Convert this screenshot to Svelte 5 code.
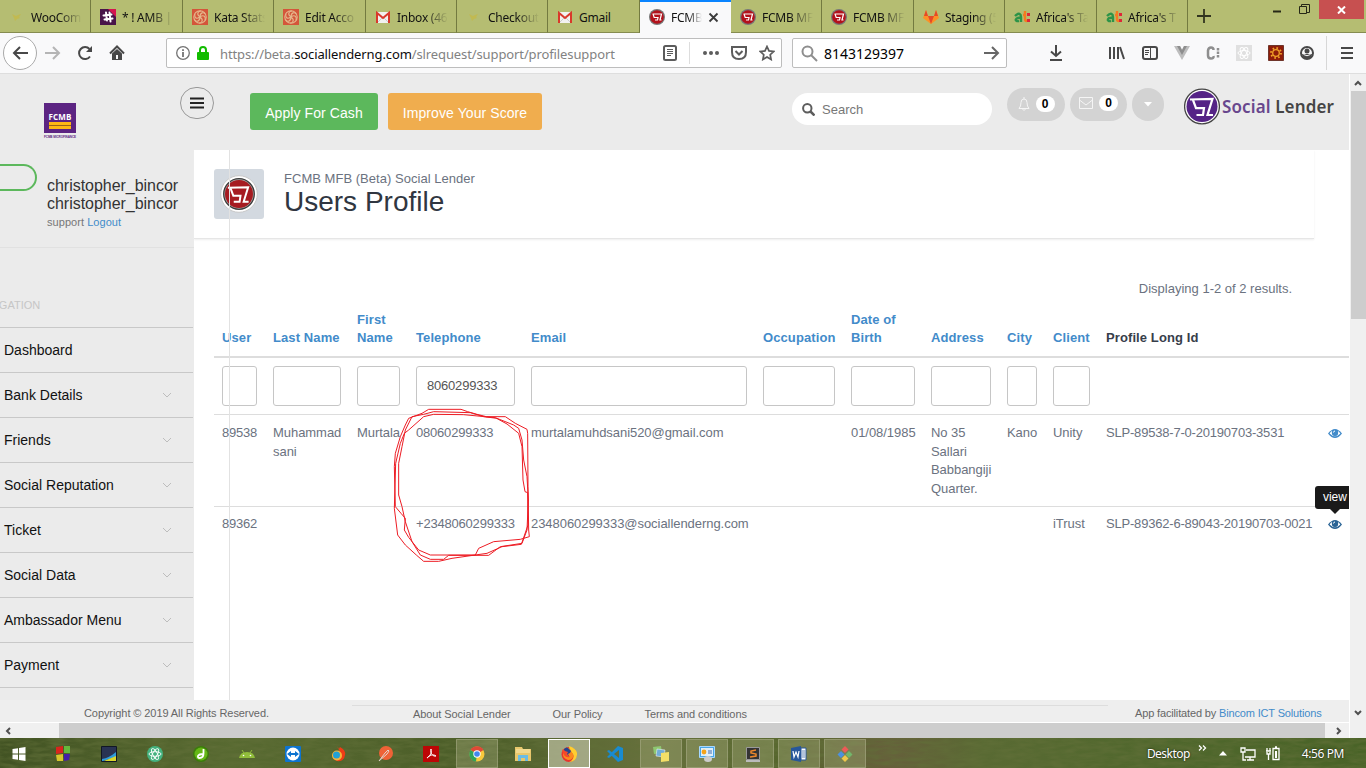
<script>
  const tabs = [
    { t: 'WooCom', i: 'woo', w: 91 }, { t: '* ! AMB | B', i: 'slack', w: 92 }, { t: 'Kata Stats', i: 'kata', w: 91 },
    { t: 'Edit Acco', i: 'kata', w: 92 }, { t: 'Inbox (468', i: 'gmail', w: 91 }, { t: 'Checkout', i: 'woo', w: 91 },
    { t: 'Gmail', i: 'gmail', w: 92 }, { t: 'FCMB', i: 'cart', w: 91, active: true }, { t: 'FCMB MF', i: 'cart', w: 91 },
    { t: 'FCMB MF', i: 'cart', w: 92 }, { t: 'Staging (5', i: 'gitlab', w: 91 }, { t: "Africa's Ta", i: 'at', w: 92 }, { t: "Africa's T", i: 'at', w: 91 }
  ];
  const nav = ['Dashboard', 'Bank Details', 'Friends', 'Social Reputation', 'Ticket', 'Social Data', 'Ambassador Menu', 'Payment'];
  const heads = ['User', 'Last Name', 'First Name', 'Telephone', 'Email', 'Occupation', 'Date of Birth', 'Address', 'City', 'Client', 'Profile Long Id', ''];
  const rows = [
    ['89538', 'Muhammad sani', 'Murtala', '08060299333', 'murtalamuhdsani520@gmail.com', '', '01/08/1985', 'No 35 Sallari Babbangiji Quarter.', 'Kano', 'Unity', 'SLP-89538-7-0-20190703-3531'],
    ['89362', '', '', '+2348060299333', '2348060299333@sociallenderng.com', '', '', '', '', 'iTrust', 'SLP-89362-6-89043-20190703-0021']
  ];
  const apps = [
    ['win', ''], ['blocks', ''], ['photo', ''], ['atom', ''], ['dream', ''], ['android', ''], ['team', ''], ['flame', ''], ['postman', ''], ['pdf', ''],
    ['chrome', 'open'], ['folder', ''], ['firefox', 'front'], ['code', ''], ['notes', 'open'], ['monitor', 'open'], ['sublime', 'open'], ['word', 'open'], ['git', 'open']
  ];
</script>

{#snippet icon(n, s = 16)}
  <svg width={s} height={s} viewBox="0 0 16 16" fill="none">
    {#if n === 'woo'}
      <path d="M3 5l4 2 2-1 3-1-2 3 1 1-3 1-2 2-1-3z" fill="#c9b83c" opacity=".6" />
    {:else if n === 'slack'}
      <path d="M0 0h16v16H0z" fill="#481449" /><path d="M8 0h8v8z" fill="#d5144f" />
      <path d="M3.500 6.500l8-1M4.500 10.500l8-1M6 3.500l1 8M9.500 3.500l1 9" stroke="#fff" stroke-width="2" stroke-linecap="round" />
    {:else if n === 'kata'}
      <path d="M0 0h16v16H0z" fill="#d4563a" />
      <g stroke="#e5b78c" stroke-width="1.100"><circle cx="8" cy="8" r="6.200" /><path d="M8 8c-4-3-2-6 1-6M8 8c0-5 4-5 5-3M8 8c4-3 6 0 5 3M8 8c4 3 2 6-1 6M8 8c0 5-4 5-5 3M8 8c-4 3-6 0-5-3" /></g>
    {:else if n === 'gmail'}
      <path d="M1 3h14v11H1z" fill="#f2f2f0" /><path d="M3 13L8 8l5 5" stroke="#ccc" /><path d="M2 14V4l6 5 6-5v10" stroke="#d9392b" stroke-width="2" />
    {:else if n === 'cart'}
      <circle cx="8" cy="8" r="8" fill="#777" /><circle cx="8" cy="8" r="6.800" fill="#b3111b" /><path d="M3.500 5h9l-1.500 6h1.500M4 5l1.200 3.500H9L8.500 11H6" stroke="#fff" stroke-width="1.200" />
    {:else if n === 'gitlab'}
      <path d="M3 1L0 9l8 6 8-6-3-8-2 6H5z" fill="#fc9126" /><path d="M3 1L1 7h4zM13 1l2 6h-4zM5 7h6l-3 8z" fill="#e34a29" />
    {:else if n === 'at'}
      <path d="M1 7c4-4 6-2 6 1v5M7 9c-6-1-7 4-2 3" stroke="#2d9448" stroke-width="2.400" /><path d="M11 2v8q0 2 2 2M9 6h3" stroke="#f47b20" stroke-width="2.400" /><path d="M13 4h3v3h-3zM13 10h3v3h-3z" fill="#df2638" />
    {:else if n === 'win'}
      <path d="M1.500 3l5.500-.8V7.500H1.500zM8 2l6.500-1v6.500H8zM1.500 8.500H7v5.300L1.500 13zM8 8.500h6.500V15L8 14z" fill="#fff" />
    {:else if n === 'blocks'}
      <path d="M1 1l7-1v7l-7 1z" fill="#d9251d" /><path d="M9 0h6v7H9z" fill="#65b93c" /><path d="M1 9l7-1v7H2z" fill="#d6c62b" /><path d="M9 8h6l-1 6-5 1z" fill="#4420a8" />
    {:else if n === 'photo'}
      <path d="M.5.5h15v15H.5z" fill="#293353" stroke="#111725" /><path d="M1 13q7-1 14-7v5L2 15H1z" fill="#2d9bdc" /><path d="M3 15l12-5v5z" fill="#d9d62d" />
    {:else if n === 'atom'}
      <circle cx="8" cy="8" r="8" fill="#44b27f" /><g stroke="#fff" stroke-width=".9"><ellipse cx="8" cy="8" rx="6" ry="2.300" /><ellipse cx="8" cy="8" rx="6" ry="2.300" transform="rotate(60 8 8)" /><ellipse cx="8" cy="8" rx="6" ry="2.300" transform="rotate(120 8 8)" /></g>
    {:else if n === 'dream'}
      <circle cx="8" cy="8" r="8" fill="#3b7c0c" /><circle cx="8" cy="8" r="6.500" fill="#65b716" /><path d="M10.500 3v4.500q0 4.500-4 4.500-2 0-1.500-2 1-2 5.500-2" stroke="#fff" stroke-width="1.800" />
    {:else if n === 'android'}
      <path d="M0 12q1-6 8-6t8 6z" fill="#91bd3b" /><path d="M3 4l2 3m8-3l-2 3" stroke="#91bd3b" /><circle cx="4.500" cy="9.500" r=".8" fill="#fff" /><circle cx="11.500" cy="9.500" r=".8" fill="#fff" />
    {:else if n === 'team'}
      <rect width="16" height="16" rx="1" fill="#0d74d0" /><circle cx="8" cy="8" r="6.500" fill="#fff" /><path d="M2 8l4-3v2h4V5l4 3-4 3V9H6v2z" fill="#0d74d0" />
    {:else if n === 'flame'}
      <path d="M6 0l2 3 1-2q6 3 5 8-1 7-8 6-3-1-4-3l8-4z" fill="#ef3c16" /><circle cx="6" cy="9.500" r="5" fill="#f5b43a" /><circle cx="5.500" cy="9" r="3.500" fill="#22a0d5" />
    {:else if n === 'postman'}
      <circle cx="9" cy="7" r="7" fill="#ef6236" /><path d="M2 15l6-8 3-3 1 1-2 3z" fill="#ef6236" stroke="#e2d3cb" />
    {:else if n === 'pdf'}
      <path d="M0 0h16v16H0z" fill="#bd0606" /><path d="M8 3c1 5-2 8-4 9 2-3 7-4 9-2-3 1-6-3-5-7" stroke="#fff" />
    {:else if n === 'chrome'}
      <circle cx="8" cy="8" r="7.500" fill="#f8c93c" /><path d="M8 8L1.500 4A7.500 7.500 0 0114.500 4z" fill="#df4937" /><path d="M8 8L1.500 4A7.500 7.500 0 007 15.500z" fill="#32a357" /><circle cx="8" cy="8" r="3.700" fill="#fff" /><circle cx="8" cy="8" r="2.800" fill="#4387ee" />
    {:else if n === 'folder'}
      <path d="M0 1h7l1 2h8v12H0z" fill="#e8c76c" /><path d="M1 4h14M1 6h14" stroke="#fbeab0" /><path d="M3 15V9h10v6h-3v-3H6v3z" fill="#6bbce5" />
    {:else if n === 'firefox'}
      <circle cx="8" cy="8.500" r="7.500" fill="#e8342e" /><path d="M8 0q9 3 8 9-1 7-8 7 6-3 4-8Q8 5 8 0" fill="#ffce30" /><path d="M5 3q2-2 4 0l3 5q1 6-5 6-6-2-5-7z" fill="#fb8a1c" /><path d="M3 3q3-3 5 0l2 2-1 2-2 1 1 2q-4 1-5-2z" fill="#25458f" /><path d="M1 5l1-2 2 2 3 1-1 2 3 3q-4 1-6-2z" fill="#f4482a" />
    {:else if n === 'code'}
      <path d="M11 0l5 2v12l-5 2L0 5l2-1 10 8V4L2 12l-2-1z" fill="#198bd0" />
    {:else if n === 'notes'}
      <path d="M0 1l8-1 1 7-8 1z" fill="#8ec771" /><path d="M4 3l8 1-1 7-8-1z" fill="#72acd6" stroke="#fff" stroke-width=".5" /><path d="M8 7l8-1v9l-8 1z" fill="#f4df67" />
    {:else if n === 'monitor'}
      <path d="M.5.5h15v11H.5z" fill="#4aa7e8" stroke="#a7d8ff" /><path d="M2 2h12v8H2z" fill="#dfeef8" /><circle cx="5" cy="6" r="2.400" fill="#f5a319" /><path d="M9 5h4M9 7h4" stroke="#456caf" /><ellipse cx="9" cy="13" rx="4" ry="3" fill="#ccc" />
    {:else if n === 'sublime'}
      <path d="M1.500 1.500h13v12h-13z" fill="#343434" stroke="#999" /><path d="M11 4L6 5v2l5 1v2l-6 1" stroke="#ef882b" stroke-width="1.500" /><path d="M1 14h14v2H1z" fill="#bbb" />
    {:else if n === 'word'}
      <path d="M0 2l10-2v16L0 14z" fill="#27579b" /><path d="M10 2h5v12h-5z" fill="#fff" stroke="#27579b" /><path d="M2 5l1 6 2-5 2 5 1-6" stroke="#fff" stroke-width="1.200" /><path d="M11 5h3m-3 2h3m-3 2h3m-3 2h3" stroke="#27579b" stroke-width=".7" />
    {:else if n === 'git'}
      <path d="M8 0l3.500 3.500L8 7 4.500 3.500z" fill="#ed5a57" /><path d="M4 5l3.500 3.500L4 12 .5 8.500z" fill="#4d91df" /><path d="M12 5l3.500 3.500L12 12 8.500 8.500z" fill="#73b66b" /><path d="M8 9l3.500 3.500L8 16l-3.500-3.500z" fill="#efc84b" />
    {/if}
  </svg>
{/snippet}

{#snippet eye(c)}
  <svg width="14" height="11" viewBox="0 0 14 11"><path d="M0 5.500Q7-3.500 14 5.500 7 14.500 0 5.500z" fill={c} /><path d="M1.600 5.500q1.500-2.300 2.400-2.600-1 5.100 3 5.100t3-5.100q1 .5 2.400 2.600-5.400 5.500-10.800 0z" fill="#fff" /><circle cx="7" cy="4.800" r="2.700" fill={c} /><path d="M5.500 4.500Q5.500 3 7 3" stroke="#fff" fill="none" /></svg>
{/snippet}

{#snippet cartmark()}
  <path d="M6 11.500l22.500-.7L23.500 27H29M9 12l3 8.200h8L19 27h-6.500" fill="none" stroke="#fff" stroke-width="2.200" />
{/snippet}

<div class="screen">
  <div class="tabs">
    {#each tabs as tab}
      <div class="tab" class:active={tab.active} style="width:{tab.w}px">
        {@render icon(tab.i)}
        <span class:full={tab.t === 'Gmail'}>{tab.t}</span>
        {#if tab.active}<svg class="x" width="11" height="11"><path d="M1.500 1.500l8 8m0-8l-8 8" stroke="#3b3b3b" stroke-width="1.800" /></svg>{/if}
      </div>
    {/each}
    <svg class="plus" width="14" height="14"><path d="M7 0v14M0 7h14" stroke="#32351f" stroke-width="1.800" /></svg>
    <div class="wincontrols">
      <svg width="8" height="14"><path d="M0 11.500h8" stroke="#262817" stroke-width="2" /></svg>
      <svg width="11" height="11" fill="none" stroke="#262817"><path d="M.5 2.500h7v7h-7zM2.500 2V.5h8v8H8" /></svg>
      <div class="close"><svg width="9" height="8"><path d="M1 .5l7 7m0-7l-7 7" stroke="#fff" stroke-width="2" /></svg></div>
    </div>
  </div>

  <div class="toolbar">
    <div class="back"><svg width="16" height="14" fill="none" stroke="#484848" stroke-width="2"><path d="M8 1L2 7l6 6M2 7h14" /></svg></div>
    <svg class="fwd" width="16" height="14" fill="none" stroke="#b5b5b5" stroke-width="2"><path d="M8 1l6 6-6 6M14 7H0" /></svg>
    <svg class="reload" width="16" height="16" fill="none"><path d="M13 11.500A6 6 0 1 1 12.500 4" stroke="#484848" stroke-width="2" /><path d="M15 1v6H9z" fill="#484848" /></svg>
    <svg class="home" width="16" height="16" fill="none"><path d="M1 8.500L8 1.500l7 7" stroke="#484848" stroke-width="2" /><path d="M3 8.500V15h10V8.500L8 4zM7 10h2v4H7z" fill="#484848" fill-rule="evenodd" /></svg>
    <div class="url">
      <svg width="14" height="14" fill="none" stroke="#737373"><circle cx="7" cy="7" r="6.300" stroke-width="1.300" /><path d="M7 6v5M7 3.200v1.700" stroke-width="1.800" /></svg>
      <svg class="lock" width="12" height="14"><path d="M3 7V4q0-3 3-3t3 3v3" fill="none" stroke="#12bc00" stroke-width="2" /><rect y="6" width="12" height="8" rx="1" fill="#12bc00" /></svg>
      <div class="address">https://beta.<b>sociallenderng.com</b>/slrequest/support/profilesupport</div>
      <svg class="reader" width="14" height="16" fill="none" stroke="#5c5c5c"><rect x="1" y="1" width="12" height="14" rx="1.500" stroke-width="2" /><path d="M4 4.500h6m-6 2h6m-6 2h6m-6 2h4" /></svg>
      <i class="sep"></i>
      <svg class="dots" width="16" height="4" fill="#5c5c5c"><circle cx="2" cy="2" r="2" /><circle cx="8" cy="2" r="2" /><circle cx="14" cy="2" r="2" /></svg>
      <svg class="pocket" width="16" height="14" fill="none" stroke="#5c5c5c" stroke-width="2"><path d="M1 1h14v5q0 7-7 7T1 6zM4.500 5L8 8.500 11.500 5" /></svg>
      <svg class="star" width="16" height="16" fill="none" stroke="#5c5c5c" stroke-width="1.700"><path d="M8 1.500l2 4.400 4.700.6-3.500 3.200.9 4.800L8 12.100l-4.100 2.400.9-4.800L1.300 6.500 6 5.900z" /></svg>
    </div>
    <div class="find">
      <svg width="17" height="17" fill="none" stroke="#8e8e8e" stroke-width="2"><circle cx="6.500" cy="6.500" r="5" /><path d="M10 10l6 6" /></svg>
      <span>8143129397</span>
      <svg width="16" height="14" fill="none" stroke="#666" stroke-width="2"><path d="M8 1l6 6-6 6M14 7H0" /></svg>
    </div>
    <div class="tools">
      <svg width="14" height="16" fill="none" stroke="#484848" stroke-width="2"><path d="M7 0v11M2 6.500L7 11l5-4.500M1 15h12" /></svg>
      <svg class="library" width="16" height="14" fill="none" stroke="#484848" stroke-width="2"><path d="M1 1v12M5 1v12M9 1v12M11 1l4 12" /></svg>
      <svg width="16" height="14" fill="none" stroke="#484848"><rect x="1" y="1" width="14" height="12" rx="2" stroke-width="2" /><path d="M8.500 1v12M3 4.500h4m-4 2h4m-4 2h3" /></svg>
      <svg width="16" height="14"><path d="M0 0h6l2 4 2-4h6L8 14z" fill="#bdbdbd" /><path d="M3 0h3l2 4 2-4h3L8 9z" fill="#8e8e8e" /></svg>
      <svg width="14" height="14" fill="none" stroke="#8e8e8e" stroke-width="2.500"><path d="M7.500 4Q7.500 1.500 5 1.500T2 4.500v5q0 3 3 3T7.500 10" /><path d="M12 2v2.500m0 1v2.500m0 1v2.500" /></svg>
      <svg width="16" height="16"><path d="M0 0h16v16H0z" fill="#e0e0e0" /><g fill="none" stroke="#fff"><ellipse cx="8" cy="8" rx="6" ry="2.500" /><ellipse cx="8" cy="8" rx="6" ry="2.500" transform="rotate(60 8 8)" /><ellipse cx="8" cy="8" rx="6" ry="2.500" transform="rotate(120 8 8)" /></g></svg>
      <svg width="16" height="16" fill="none"><path d="M.5.5h15v15H.5z" fill="#8f1d09" stroke="#6f352b" /><circle cx="8" cy="8" r="3.300" stroke="#f2a229" stroke-width="1.300" /><circle cx="8" cy="8" r="5" stroke="#f2a229" stroke-width="1.800" stroke-dasharray="1.600 2.300" /></svg>
      <svg width="14" height="14"><circle cx="7" cy="7" r="6" fill="none" stroke="#484848" stroke-width="2" /><circle cx="7" cy="5" r="2.500" fill="#484848" /><path d="M2 8h10q-1 5-5 5T2 8" fill="#484848" /><path d="M3.500 8.500q3.500 2.500 7 0" stroke="#f9f9fa" fill="none" /></svg>
      <i></i>
      <svg width="12" height="12" stroke="#484848" stroke-width="2"><path d="M0 1h12M0 6h12M0 11h12" /></svg>
    </div>
  </div>

  <div class="viewport">
    <div class="page">
      <header>
        <div class="brand"><div>FCMB<i></i></div><small>FCMB MICROFINANCE</small></div>
        <div class="burger"><svg width="14" height="12" stroke="#222" stroke-width="2"><path d="M0 1.500h14M0 6h14M0 10.500h14" /></svg></div>
        <button class="green">Apply For Cash</button>
        <button class="orange">Improve Your Score</button>
        <div class="search"><svg width="13" height="13" fill="none" stroke="#5d5d5d" stroke-width="2"><circle cx="5.300" cy="5.300" r="4.200" /><path d="M8.500 8.500l4 4" stroke-width="2.500" /></svg>Search</div>
        <div class="pill"><svg width="12" height="14" fill="none" stroke="#f5f5f5"><path d="M1 11.500q2-2 2-6Q3 2 6 2t3 3.500q0 4 2 6zM6 0v2M4.500 12q1.500 3 3 0" /></svg><b>0</b></div>
        <div class="pill mail"><svg width="14" height="12" fill="none" stroke="#f5f5f5"><path d="M.5.5h13v11H.5zM.5 3l6.500 5 6.500-5" /></svg><b>0</b></div>
        <div class="pill caret"><svg width="8" height="5"><path d="M0 0h8L4 4.500z" fill="#fff" /></svg></div>
        <div class="social"><svg width="36" height="37" viewBox="0 0 36 37"><circle cx="18" cy="18.500" r="17.400" fill="#fff" stroke="#454545" stroke-width="1.300" /><circle cx="18" cy="18.500" r="15.500" fill="#552386" />{@render cartmark()}</svg><span><em>Social</em> Lender</span></div>
      </header>

      <div class="body">
        <aside>
          <div class="account">
            <div class="avatar"></div>
            <div class="who"><strong>christopher_bincor<br />christopher_bincor</strong><small>support <a href="#logout">Logout</a></small></div>
          </div>
          <div class="navtitle">NAVIGATION</div>
          <nav>
            {#each nav as n, k}
              <div>{n}{#if k}<svg width="10" height="7" fill="none" stroke="#bdbdbd"><path d="M1 1l4 4 4-4" /></svg>{/if}</div>
            {/each}
          </nav>
        </aside>
        <main>
          <div class="title">
            <div class="badge"><svg width="38" height="38" viewBox="0 0 38 38"><circle cx="19" cy="19" r="18.300" fill="#fff" stroke="#c8c8c8" /><circle cx="19" cy="19" r="15.300" fill="#aaa" stroke="#3b3b3b" stroke-width="1.300" /><circle cx="19" cy="19" r="14" fill="#a61b21" /><g transform="translate(2.500 2.500) scale(.9)">{@render cartmark()}</g></svg></div>
            <div><p>FCMB MFB (Beta) Social Lender</p><h1>Users Profile</h1></div>
          </div>
          <p class="summary">Displaying 1-2 of 2 results.</p>
          <table>
            <colgroup><col class="c0" /><col class="c1" /><col class="c2" /><col class="c3" /><col class="c4" /><col class="c5" /><col class="c6" /><col class="c7" /><col class="c8" /><col class="c9" /><col class="c10" /><col class="c11" /></colgroup>
            <thead>
              <tr>{#each heads as h, k}<th class:dark={k === 10}>{h}</th>{/each}</tr>
              <tr class="filters">{#each heads as h, k}<td>{#if k < 10}<div class="input">{k === 3 ? '8060299333' : ''}</div>{/if}</td>{/each}</tr>
            </thead>
            <tbody>
              {#each rows as r, k}
                <tr class:first={k === 0}>{#each r as c}<td>{c}</td>{/each}<td class="act">{@render eye(k ? '#2a6496' : '#428bca')}{#if k}<span class="tip">view</span>{/if}</td></tr>
              {/each}
            </tbody>
          </table>
        </main>
        <i class="guide"></i>
      </div>
      <footer><span class="copy">Copyright © 2019 All Rights Reserved.</span><div><span>About Social Lender</span><span>Our Policy</span><span>Terms and conditions</span></div><span class="by">App facilitated by <a href="#bincom">Bincom ICT Solutions</a></span></footer>
      <div class="hscroll"><svg width="6" height="8" fill="none" stroke="#505050" stroke-width="2"><path d="M5 1L2 4l3 3" /></svg><i></i><svg width="6" height="8" fill="none" stroke="#505050" stroke-width="2"><path d="M1 1l3 3-3 3" /></svg></div>
    </div>
    <div class="vscroll"><svg width="8" height="6" fill="none" stroke="#505050" stroke-width="2"><path d="M1 5l3-3 3 3" /></svg><i></i><svg width="8" height="6" fill="none" stroke="#505050" stroke-width="2"><path d="M1 1l3 3 3-3" /></svg></div>
  </div>

  <div class="taskbar">
    <svg class="grass" width="1366" height="31"><filter id="grain" x="0" y="0" width="100%" height="100%"><feTurbulence type="fractalNoise" baseFrequency=".06 .25" numOctaves="3" seed="4" /><feColorMatrix values="0 0 0 0 .12  0 0 0 0 .16  0 0 0 0 .04  1.400 0 0 0 -.45" /></filter><rect width="1366" height="31" filter="url(#grain)" /></svg>
    <div class="apps">{#each apps as a}<div class="app {a[1]}">{@render icon(a[0])}</div>{/each}</div>
    <div class="tray">
      <span class="desk">Desktop</span><svg class="more" width="9" height="6" fill="none" stroke="#fff" stroke-width="1.300"><path d="M1 .5L3.500 3 1 5.500M5 .5L7.500 3 5 5.500" /></svg>
      <svg class="up" width="8" height="5"><path d="M0 4.500h8L4 0z" fill="#fff" /></svg>
      <svg class="net" width="16" height="15" fill="none" stroke="#fff" stroke-width="1.300"><path d="M6 4h9v7H5M10 11v3M7 14h7M1 2h4v4H1zM3 6v8h3" /></svg>
      <svg class="bat" width="15" height="15" fill="none" stroke="#fff" stroke-width="1.300"><path d="M8 2.500h6v11H8zM10 1h2M1 5h5M2 2v3m3-3v3M2 6v2h3V6M3.500 8v6" /><path d="M10 5h2v7h-2z" fill="#fff" stroke="none" /></svg>
      <span class="time">4:56 PM</span>
    </div>
  </div>

  <svg class="scribble" width="140" height="156" viewBox="35 324 420 468" fill="none" stroke="#ed1c24" stroke-width="3" stroke-linejoin="round">
    <path d="M145 328H242L262 335 290 343 318 350H375L405 370 440 388 442 400 443 560 445 690 447 710 420 718 340 725 295 745 285 765H150L115 750 85 712 72 690 75 655 62 640 45 620 42 500 45 460 60 410 75 375 85 355 125 340z" />
    <path d="M95 350L130 343 160 335 270 338 310 350 350 355 400 375 415 385 425 420 430 480 440 530 444 600 440 690 425 730 360 740 325 766H205L190 778H150L120 765 95 725 75 665 65 620 55 585V490L65 440 75 390z" />
    <path d="M85 390L130 350 160 343 250 344 345 353 380 372 415 400 425 440 428 540 434 575 442 578 443 675 423 733 365 740 320 760 215 775 175 784H130L108 765 75 735 52 705 42 625 46 490 60 430 72 400z" />
  </svg>
</div>

<style>
  :global(body) { margin: 0; overflow: hidden; }
  * { box-sizing: border-box; }
  svg { flex: none; display: block; }
  i { font-style: normal; flex: none; }
  a { color: #428bca; text-decoration: none; }
  .screen { position: relative; width: 1366px; height: 768px; display: flex; flex-direction: column; overflow: hidden; font-family: "Liberation Sans", Arial, sans-serif; background: #fff; }
  .tabs { height: 33px; flex: none; display: flex; background: #b5bd72; font: 12px "Noto Sans", "Open Sans", sans-serif; letter-spacing: -.25px; color: #111; border-bottom: 1px solid #858c50; }
  .tab { height: 33px; flex: none; display: flex; align-items: center; padding: 2px 8px 0 9px; gap: 6px; border-right: 1px solid #737a40; border-bottom: 1px solid #858c50; }
  .tab span { flex: 1; min-width: 0; overflow: hidden; white-space: nowrap; -webkit-mask-image: linear-gradient(90deg, #000 55%, transparent); mask-image: linear-gradient(90deg, #000 55%, transparent); }
  .tab span.full { -webkit-mask-image: none; mask-image: none; }
  .tab.active { background: #f9f9fa; border-top: 2px solid #0a84ff; border-right: 0; border-bottom-color: #f9f9fa; padding-top: 0; padding-right: 12px; }
  .plus { margin: 9px 0 0 9px; }
  .wincontrols { margin-left: auto; display: flex; gap: 18px; padding-right: 2px; }
  .wincontrols > svg:nth-child(2) { margin-top: 4px; }
  .close { width: 45px; height: 19px; margin-left: -9px; background: #c75050; display: flex; align-items: center; justify-content: center; }
  .toolbar { height: 41px; flex: none; display: flex; align-items: center; background: #f9f9fa; border-bottom: 1px solid #dedede; padding-left: 3px; }
  .back { width: 34px; height: 34px; border: 1px solid #aaa; border-radius: 50%; background: #fff; display: grid; place-items: center; }
  .fwd { margin-left: 8px; } .reload { margin-left: 16px; } .home { margin-left: 16px; }
  .url { margin-left: 41px; width: 616px; height: 30px; border: 1px solid #bdbdbd; border-radius: 2px; background: #fff; display: flex; align-items: center; padding-left: 9px; }
  .lock { margin-left: 7px; }
  .address { margin-left: 11px; width: 443px; white-space: nowrap; font: 13px "Noto Sans", "Open Sans", sans-serif; letter-spacing: -.11px; color: #828282; padding-top: 1px; }
  .address b { font-weight: 400; color: #0c0c0d; }
  .sep { width: 1px; height: 22px; background: #ddd; margin: 0 13px 0 12px; }
  .pocket { margin-left: 12px; } .star { margin-left: 12px; }
  .find { margin-left: 10px; width: 215px; height: 30px; border: 1px solid #bdbdbd; border-radius: 2px; background: #fff; display: flex; align-items: center; padding: 0 6px 0 8px; font: 14px "Noto Sans", "Open Sans", sans-serif; }
  .find span { margin: 0 auto 0 6px; }
  .tools { flex: 1; display: flex; align-items: center; gap: 16px; padding-left: 42px; }
  .library { margin-left: 30px; }
  .tools svg:nth-child(n+3) { position: relative; left: 1px; }
  .tools i { width: 1px; height: 34px; background: #d7d7d7; margin: 0 -3px 0 -3px; }
  .viewport { flex: 1; min-height: 0; display: flex; }
  .page { width: 1349px; display: flex; flex-direction: column; overflow: hidden; }
  header { height: 76px; flex: none; background: #ebebeb; display: flex; align-items: flex-start; padding-left: 44px; }
  .brand { width: 32px; margin-top: 29px; color: #5c2482; }
  .brand div { height: 30px; background: #5c2482; color: #fff; font: bold 8px "Open Sans", sans-serif; padding-top: 8px; text-align: center; letter-spacing: .2px; }
  .brand i { display: block; height: 7px; margin: 0 5px; background: linear-gradient(#fdb813 42%, #9b6415 42%, #9b6415 58%, #fdb813 58%); }
  .brand small { display: block; font-size: 3px; font-weight: bold; line-height: 8px; white-space: nowrap; letter-spacing: -.05px; }
  .burger { margin: 13px 0 0 104px; width: 34px; height: 32px; border: 1px solid #999; border-radius: 17px; display: grid; place-items: center; }
  button { margin: 19px 0 0 10px; height: 37px; border: 0; border-radius: 3px; color: #fff; font: 14px "Liberation Sans", Arial, sans-serif; letter-spacing: .08px; padding: 2px 0 0; }
  .green { width: 128px; margin-left: 36px; background: #5cb85c; } .orange { width: 154px; background: #f0ad4e; }
  .search { margin: 19px 0 0 250px; width: 200px; height: 32px; border-radius: 16px; background: #fff; display: flex; align-items: center; gap: 7px; padding-left: 10px; font-size: 13px; color: #777; }
  .pill { margin: 14px 0 0 15px; width: 58px; height: 33px; border-radius: 17px; background: #d3d3d3; display: flex; align-items: center; justify-content: center; gap: 6px; padding-bottom: 1px; }
  .pill.mail { margin-left: 5px; width: 57px; padding-bottom: 3px; } .pill.caret { width: 32px; margin-left: 5px; }
  .pill b { width: 19px; height: 16px; border-radius: 8px; background: #fff; color: #000; font: bold 12px/16px "Liberation Sans", sans-serif; text-align: center; }
  .social { margin: 14px 0 0 20px; display: flex; align-items: center; gap: 2px; font: 600 17px "Noto Sans", "Open Sans", sans-serif; letter-spacing: .12px; color: #454545; white-space: nowrap; }
  .social em { font-style: normal; color: #68478d; }
  .body { position: relative; height: 550px; flex: none; display: flex; }
  .guide { position: absolute; left: 229px; top: 0; width: 1px; height: 550px; background: #e2e2e2; }
  aside { width: 194px; background: #ebebeb; flex: none; overflow: hidden; }
  .account { height: 98px; display: flex; border-bottom: 1px solid #e1e1e1; }
  .avatar { width: 37px; height: 27px; margin-top: 14px; border: 2px solid #5cb85c; border-left: 0; border-radius: 0 14px 14px 0; flex: none; }
  .who { margin: 27px 0 0 10px; width: 132px; overflow: hidden; color: #333; }
  .who strong { font-weight: 400; font-size: 16px; line-height: 18px; letter-spacing: -.03px; display: block; }
  .who small { display: block; font-size: 11px; line-height: 18px; letter-spacing: .05px; color: #777; }
  .navtitle { height: 79px; padding-top: 51px; margin-left: -26px; font-size: 11px; line-height: 13px; letter-spacing: 0; color: #c6c6c6; }
  nav div { height: 45px; border-top: 1px solid #c8c8c8; width: 193px; display: flex; align-items: center; justify-content: space-between; padding: 0 21px 0 4px; font-size: 14px; color: #111; }
  nav div:last-child { height: 46px; border-bottom: 1px solid #c8c8c8; }
  main { width: 1155px; background: #fff; flex: none; color: #6b7280; font-size: 13px; }
  .title { width: 1120px; height: 89px; border-bottom: 1px solid #e6e6e6; box-shadow: 0 1px 2px #eee; display: flex; padding: 19px 20px; gap: 20px; }
  .badge { width: 50px; height: 50px; border-radius: 3px; background: #d3d9e0; display: grid; place-items: center; }
  .title p { margin: 1px 0 0; line-height: 17px; font-size: 13px; letter-spacing: .03px; }
  h1 { margin: 0; font: 28px/30px "Liberation Sans", Arial, sans-serif; color: #303641; }
  .summary { margin: 40px 57px 0 0; text-align: right; line-height: 19px; }
  table { margin: 0 0 0 20px; width: 1136px; border-collapse: collapse; table-layout: fixed; line-height: 18.570px; }
  .c0 { width: 51px; } .c1 { width: 84px; } .c2 { width: 59px; } .c3 { width: 115px; } .c4 { width: 232px; } .c5 { width: 88px; } .c6 { width: 80px; } .c7 { width: 76px; } .c8 { width: 46px; } .c9 { width: 53px; } .c10 { width: 222px; } .c11 { width: 30px; }
  th { text-align: left; vertical-align: bottom; padding: 8px 8px 8px; color: #428bca; height: 59px; border-bottom: 2px solid #ddd; letter-spacing: .1px; }
  th.dark { color: #373e4a; }
  td { vertical-align: top; padding: 8px 0 8px 8px; border-top: 1px solid #ddd; }
  .filters td { height: 57px; padding-right: 8px; border-top: 0; }
  .input { height: 40px; border: 1px solid #c6c6c6; border-radius: 3px; padding: 0 10px; line-height: 37px; color: #555; letter-spacing: -.2px; }
  .first td { height: 92px; padding-top: 9px; padding-bottom: 7px; }
  td { letter-spacing: -.05px; white-space: nowrap; }
  .first td:nth-child(2), .first td:nth-child(8) { white-space: normal; }
  td:nth-child(1), td:nth-child(4), td:nth-child(11) { letter-spacing: -.2px; }
  td.act { position: relative; padding-top: 12px; }
  .first td.act { padding-top: 13px; }
  .tip { position: absolute; left: -5px; top: -21px; width: 45px; height: 23px; border-radius: 3px; background: #1a1a1a; color: #fff; font-size: 12px; line-height: 22px; padding-left: 8px; }
  .tip::after { content: ''; position: absolute; left: 15px; top: 23px; border: 5px solid transparent; border-top-color: #1a1a1a; border-bottom: 0; }
  footer { height: 22px; flex: none; background: #eee; display: flex; font-size: 11px; letter-spacing: -.08px; color: #666; line-height: 17px; }
  .copy { width: 268px; margin: 5px 0 0 84px; }
  footer div { width: 756px; margin-top: 5px; border-top: 1px solid #ddd; padding-left: 61px; display: flex; gap: 42px; }
  .by { margin: 5px 0 0 27px; white-space: nowrap; letter-spacing: -.15px; }
  .hscroll { height: 16px; flex: none; background: #f0f0f0; border-top: 1px solid #fff; display: flex; align-items: center; padding: 0 5px; }
  .hscroll i { width: 1266px; height: 15px; margin: 0 11px 0 48px; background: #cdcdcd; }
  .vscroll { width: 17px; background: #f0f0f0; border-left: 1px solid #fff; display: flex; flex-direction: column; align-items: center; padding: 6px 0 22px; }
  .vscroll i { width: 15px; height: 228px; margin: 5px 0 auto; background: #cdcdcd; }
  .taskbar { position: relative; height: 30px; flex: none; display: flex; overflow: hidden; background: linear-gradient(90deg, #425323, #586a31 17%, #4b5d28 35%, #68713d 48%, #56662d 57%, #665f3b 65%, #596a33 72%, #4f672c 86%, #496327); color: #fff; font: 12px "Noto Sans", "Open Sans", sans-serif; }
  .grass { position: absolute; inset: 0; }
  .apps { position: relative; display: flex; gap: 4px; padding: 1px 0 0; margin-left: -4px; }
  .app { width: 42px; height: 29px; display: grid; place-items: center; border: 1px solid transparent; }
  .app:first-child { padding-left: 3px; }
  .app.open { background: #b5ba8d50; border-color: #b4b69370; } .app.front { background: #c4c6a9aa; border-color: #fff; }
  .tray { position: relative; margin-left: auto; display: flex; align-items: center; padding-right: 22px; text-shadow: 0 0 2px #000; }
  .desk { letter-spacing: -.55px; }
  .more { margin: -10px 0 0 8px; } .up { margin-left: 12px; } .net { margin-left: 13px; } .bat { margin-left: 9px; } .time { margin-left: 22px; letter-spacing: -.4px; }
  .scribble { position: absolute; left: 391.700px; top: 408px; }
</style>
